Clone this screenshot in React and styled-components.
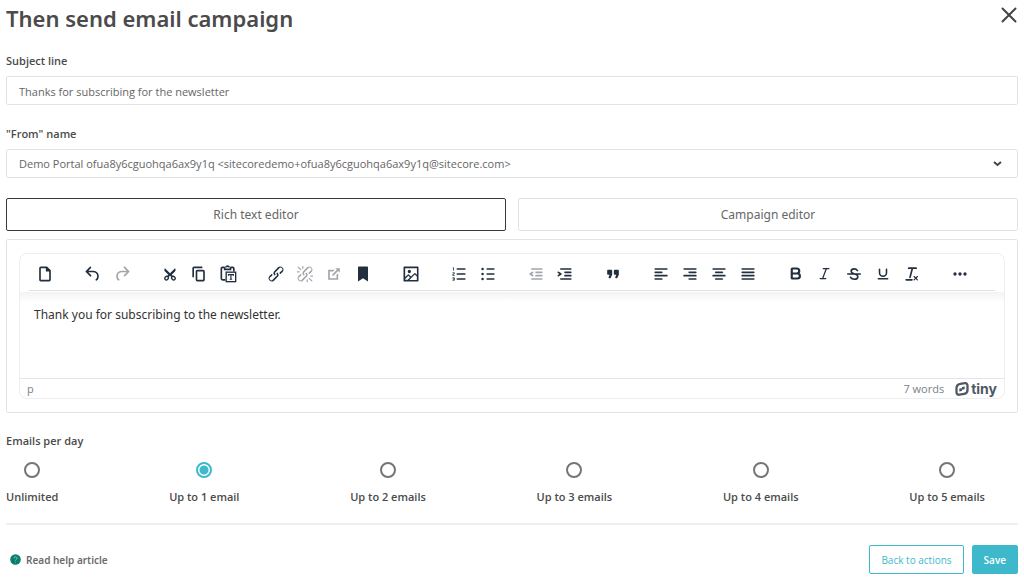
import React, { useState } from "react";
import styled, { createGlobalStyle } from "styled-components";
import { Bold, Italic, Underline } from "lucide-react";

const colors = {
  text: "#4b4b4b",
  soft: "#666666",
  border: "#e3e3e3",
  ink: "#222f3e",
  teal: "#3db9cb",
};

const GlobalStyle = createGlobalStyle`
  *, *::before, *::after { box-sizing: border-box; }
  body {
    margin: 0;
    background: #fff;
    color: ${colors.text};
    font-family: "Open Sans", "Noto Sans", sans-serif;
    font-size: 11px;
    line-height: 16px;
  }
  button, input, select, textarea { font: inherit; color: inherit; margin: 0; }
`;

const Page = styled.main`
  padding: 4px 6px 8px;
`;

const Header = styled.header`
  display: flex;
  justify-content: space-between;
  align-items: flex-start;
  margin-bottom: 21px;
`;

const Title = styled.h1`
  margin: 0;
  font-family: "Noto Sans", sans-serif;
  font-size: 22px;
  line-height: 28px;
  font-weight: 600;
`;

const CloseButton = styled.button`
  display: flex;
  padding: 3px 1px;
  border: 0;
  background: none;
  cursor: pointer;
`;

const Field = styled.div`
  display: flex;
  flex-direction: column;
  gap: 7px;
  margin-bottom: 21px;
`;

const Label = styled.label`
  font-weight: 600;
  line-height: 16px;
`;

const controlBox = `
  width: 100%;
  height: 29px;
  padding: 1px 12px 0;
  border: 1px solid ${colors.border};
  border-radius: 2px;
  background: #fff;
  outline: 0;
`;

const TextInput = styled.input`
  ${controlBox}
  && { color: ${colors.soft}; }
`;

const SelectWrap = styled.div`
  position: relative;
  display: flex;
`;

const Select = styled.select`
  ${controlBox}
  appearance: none;
  && { color: ${colors.soft}; }
`;

const Chevron = styled.svg`
  position: absolute;
  right: 16px;
  top: 10px;
  pointer-events: none;
`;

const Tabs = styled.div`
  display: grid;
  grid-template-columns: 1fr 1fr;
  gap: 12px;
  margin-top: -1px;
  margin-bottom: 8px;
`;

const Tab = styled.button`
  height: 33px;
  padding-top: 2px;
  border: 1px solid ${(p) => (p.$active ? "#3b3b3b" : colors.border)};
  border-radius: 2px;
  background: #fff;
  cursor: pointer;
  && {
    font-family: "Noto Sans", sans-serif;
    font-size: 12px;
    color: ${colors.soft};
  }
`;

const EditorCard = styled.section`
  padding: 13px 12px;
  border: 1px solid ${colors.border};
  border-radius: 2px;
  margin-bottom: 20px;
`;

const Editor = styled.div`
  border: 1px solid #eeeeee;
  border-radius: 8px;
  overflow: hidden;
`;

const Toolbar = styled.div`
  display: flex;
  gap: 19px;
  height: 37px;
  margin: 0 9px;
  align-items: center;
  border-bottom: 1px solid #dfe1e3;
  padding: 3px 0 0 1px;
`;

const ToolGroup = styled.div`
  display: flex;
`;

const ToolButton = styled.button`
  display: flex;
  align-items: center;
  justify-content: center;
  width: 29px;
  height: 29px;
  padding: 0;
  border: 0;
  background: none;
  cursor: pointer;
  && { color: ${colors.ink}; }
  &&:disabled { color: #a1a6ad; }
`;

const TextArea = styled.textarea`
  display: block;
  width: 100%;
  height: 86px;
  padding: 15px 14px;
  margin-top: 1px;
  border: 0;
  outline: 0;
  resize: none;
  background: linear-gradient(#f3f3f3, #fff 10px);
  && {
    font-family: "Noto Sans", sans-serif;
    font-size: 12px;
    color: #333;
  }
`;

const StatusBar = styled.div`
  display: flex;
  align-items: center;
  height: 20px;
  padding: 1px 7px 0;
  border-top: 1px solid #e3e5e7;
  color: #7a828b;
`;

const WordCount = styled.span`
  margin-left: auto;
  margin-right: 11px;
`;

const Brand = styled.a`
  display: flex;
  align-items: center;
  gap: 2px;
  color: #4e5965;
  font-family: Inter, sans-serif;
  font-size: 14px;
  font-weight: 700;
  text-decoration: none;
`;

const Frequency = styled.fieldset`
  margin: 0 0 18px;
  padding: 0;
  border: 0;
  min-width: 0;
`;

const Legend = styled.legend`
  padding: 0;
  font-weight: 600;
  margin-bottom: 13px;
`;

const Options = styled.div`
  display: flex;
  justify-content: space-between;
  padding-right: 33px;
`;

const Option = styled.label`
  display: flex;
  flex-direction: column;
  align-items: center;
  gap: 11px;
  font-weight: 600;
`;

const Radio = styled.input`
  appearance: none;
  width: 16px;
  height: 16px;
  border: 2px solid #757575;
  border-radius: 50%;
  background: #fff;
  &:checked {
    border-color: ${colors.teal};
    background: radial-gradient(circle, ${colors.teal} 4px, #fff 5px);
  }
`;

const Footer = styled.footer`
  display: flex;
  align-items: center;
  gap: 8px;
  padding-top: 20px;
  border-top: 2px solid #eeeeee;
`;

const HelpLink = styled.a`
  display: flex;
  align-items: center;
  gap: 5px;
  margin-right: auto;
  padding-left: 4px;
  color: #6b6b6b;
  font-family: "Noto Sans", sans-serif;
  font-size: 10px;
  font-weight: 600;
  text-decoration: none;
`;

const ActionButton = styled.button`
  height: 29px;
  padding: 0 11px;
  border: 1px solid ${colors.teal};
  border-radius: 2px;
  background: ${(p) => (p.$primary ? colors.teal : "#fff")};
  cursor: pointer;
  && {
    color: ${(p) => (p.$primary ? "#fff" : colors.teal)};
    font-size: 10px;
    font-weight: ${(p) => (p.$primary ? 600 : 500)};
  }
`;

const Glyph = ({ children }) => (
  <svg width="20" height="20" viewBox="0 0 24 24" fill="currentColor" aria-hidden="true">
    {children}
  </svg>
);

const Bars = ({ rows }) => (
  <Glyph>
    {rows.map(([x, w], i) => (
      <rect key={i} x={x} y={5 + i * 4} width={w} height="2" rx="1" />
    ))}
  </Glyph>
);

const chain =
  "M6.2 12.3a1 1 0 0 1 1.4 1.4l-2 2a2 2 0 1 0 2.6 2.8l4.8-4.8a1 1 0 0 0 0-1.4 1 1 0 1 1 1.4-1.3 2.9 2.9 0 0 1 0 4L9.6 20a3.9 3.9 0 0 1-5.5-5.5l2-2Zm11.6-.6a1 1 0 0 1-1.4-1.4l2-2a2 2 0 1 0-2.6-2.8L11 10.3a1 1 0 0 0 0 1.4A1 1 0 1 1 9.6 13a2.9 2.9 0 0 1 0-4L14.4 4a3.9 3.9 0 0 1 5.5 5.5l-2 2Z";

const indentRows = (
  <>
    <rect x="6" y="5" width="14" height="2" rx="1" />
    <rect x="11" y="9" width="9" height="2" rx="1" />
    <rect x="11" y="13" width="9" height="2" rx="1" />
    <rect x="6" y="17" width="14" height="2" rx="1" />
  </>
);

const icons = {
  newDocument: (
    <Glyph>
      <path d="M14.4 3H7a2 2 0 0 0-2 2v14c0 1.1.9 2 2 2h10a2 2 0 0 0 2-2V7.6L14.4 3ZM17 19H7V5h6v4h4v10Z" />
    </Glyph>
  ),
  undo: (
    <Glyph>
      <path d="M6.4 8H12c3.7 0 6.2 2 6.8 5.1.6 2.7-.4 5.6-2.3 6.8a1 1 0 0 1-1-1.8c1.1-.6 1.8-2.7 1.4-4.6-.5-2.1-2.1-3.5-4.9-3.5H6.4l3.3 3.3a1 1 0 1 1-1.4 1.4l-5-5a1 1 0 0 1 0-1.4l5-5a1 1 0 0 1 1.4 1.4L6.4 8Z" />
    </Glyph>
  ),
  redo: (
    <Glyph>
      <path d="M17.6 10H12c-2.8 0-4.4 1.4-4.9 3.5-.4 2 .3 4 1.4 4.6a1 1 0 1 1-1 1.8c-2-1.2-2.9-4.1-2.3-6.8.6-3 3-5.1 6.8-5.1h5.6l-3.3-3.3a1 1 0 1 1 1.4-1.4l5 5a1 1 0 0 1 0 1.4l-5 5a1 1 0 0 1-1.4-1.4l3.3-3.3Z" />
    </Glyph>
  ),
  cut: (
    <Glyph>
      <path d="M6 5l6 6 6-6c1 1.3 1 2.8 0 4l-4 4 1.5 1.5-1.5 1.500-2-2-2 2-1.500-1.500L10 13 6 9c-1-1.200-1-2.700 0-4Z" />
      <g fill="none" stroke="currentColor" strokeWidth="1.7">
        <ellipse cx="7.9" cy="17" rx="2.4" ry="2" transform="rotate(-45 7.9 17)" />
        <ellipse cx="16.1" cy="17" rx="2.4" ry="2" transform="rotate(45 16.1 17)" />
      </g>
    </Glyph>
  ),
  copy: (
    <Glyph>
      <path d="M16 3H6a2 2 0 0 0-2 2v11h2V5h10V3Zm1 4a2 2 0 0 1 2 2v10a2 2 0 0 1-2 2h-7a2 2 0 0 1-2-2V9c0-1.1.9-2 2-2h7Zm0 12V9h-7v10h7Z" />
    </Glyph>
  ),
  pasteText: (
    <Glyph>
      <g fill="none" stroke="currentColor" strokeWidth="2">
        <path d="M9 19H5.500A1.500 1.500 0 0 1 4 17.500v-12A1.500 1.500 0 0 1 5.500 4H8M15 4h2.500A1.500 1.500 0 0 1 19 5.500V9" />
        <path d="M8 3.500v3h7v-3" />
        <path d="M9.500 4a2.100 2.100 0 0 1 4 0" />
        <rect x="9.8" y="9.8" width="11.4" height="11.4" strokeWidth="1.6" />
        <path d="M12.500 14v-1.200h6V14M15.500 13v5.500M14 18.300h3" strokeWidth="1.4" />
      </g>
    </Glyph>
  ),
  link: (
    <Glyph>
      <path d={chain} />
    </Glyph>
  ),
  unlink: (
    <Glyph>
      <path d={chain} />
      <path
        d="M3.800 3.700 7 6.800M3 9.400h2M9.400 3v2M20.200 20.300 17 17.200M21 14.600h-2M14.600 21v-2"
        fill="none"
        stroke="currentColor"
        strokeWidth="1.5"
        strokeLinecap="round"
      />
    </Glyph>
  ),
  openLink: (
    <Glyph>
      <path d="m15 13 2-2v8H5V7h8l-2 2H7v8h8v-4Zm4-8v5.500l-2-2-5.600 5.500H10v-1.400L15.500 7l-2-2H19Z" />
    </Glyph>
  ),
  bookmark: (
    <Glyph>
      <path d="M6 4v17l6-4 6 4V4c0-.6-.4-1-1-1H7a1 1 0 0 0-1 1Z" />
    </Glyph>
  ),
  image: (
    <Glyph>
      <path d="m5 15.700 3.300-3.200c.3-.3.7-.3 1 0L12 15l4.100-4c.3-.4.8-.4 1 0l2 1.900V5H5v10.700ZM5 18V19h3l2.800-2.900-2-2L5 17.900Zm14-3-2.500-2.400-6.400 6.500H19v-4ZM4 3h16c.6 0 1 .4 1 1v16c0 .6-.4 1-1 1H4a1 1 0 0 1-1-1V4c0-.6.4-1 1-1Zm6 8a2 2 0 1 0 0-4 2 2 0 0 0 0 4Z" />
    </Glyph>
  ),
  orderedList: (
    <Glyph>
      <rect x="9" y="5" width="11" height="2" rx="1" />
      <rect x="9" y="11" width="11" height="2" rx="1" />
      <rect x="9" y="17" width="11" height="2" rx="1" />
      <path
        d="M4.500 4.500h1V8M4.200 10.500h2.200v1.200l-1.900.8v1.200h2.200M4.200 16.500h2.200v3H4.200M4.500 18h1.900"
        fill="none"
        stroke="currentColor"
        strokeLinejoin="round"
      />
    </Glyph>
  ),
  bulletList: (
    <Glyph>
      {[6, 12, 18].map((y) => (
        <g key={y}>
          <circle cx="5.5" cy={y} r="1.5" />
          <rect x="10" y={y - 1} width="10" height="2" rx="1" />
        </g>
      ))}
    </Glyph>
  ),
  outdent: (
    <Glyph>
      {indentRows}
      <path d="M8.600 13.200a1 1 0 0 1-1.200 1.600l-3-2a1 1 0 0 1 0-1.600l3-2a1 1 0 0 1 1.200 1.600L6.800 12l1.800 1.200Z" />
    </Glyph>
  ),
  indent: (
    <Glyph>
      {indentRows}
      <path d="M3.400 14.800a1 1 0 0 1-.2-1.400L5.200 12l-1.800-1.200a1 1 0 0 1 1.200-1.600l3 2a1 1 0 0 1 0 1.600l-3 2a1 1 0 0 1-1.200 0Z" />
    </Glyph>
  ),
  quote: (
    <Glyph>
      <path d="M7.500 17h.9c.4 0 .7-.2.9-.6L11 13V8c0-.6-.4-1-1-1H6a1 1 0 0 0-1 1v4c0 .6.4 1 1 1h2l-1.300 2.700a1 1 0 0 0 .8 1.300Zm8 0h.9c.4 0 .7-.2.9-.6L19 13V8c0-.6-.4-1-1-1h-4a1 1 0 0 0-1 1v4c0 .6.4 1 1 1h2l-1.300 2.700a1 1 0 0 0 .8 1.300Z" />
    </Glyph>
  ),
  alignLeft: <Bars rows={[[4, 16], [4, 10], [4, 16], [4, 10]]} />,
  alignRight: <Bars rows={[[4, 16], [10, 10], [4, 16], [10, 10]]} />,
  alignCenter: <Bars rows={[[4, 16], [7, 10], [4, 16], [7, 10]]} />,
  justify: <Bars rows={[[4, 16], [4, 16], [4, 16], [4, 16]]} />,
  bold: <Bold size={15} strokeWidth={3.5} />,
  italic: <Italic size={15} strokeWidth={2} />,
  strike: (
    <Glyph>
      <g fill="none" stroke="currentColor" strokeWidth="1.9" strokeLinecap="round">
        <path d="M16.200 8C15.200 6.400 14 5.800 12.300 5.800c-2.200 0-3.700 1.200-3.700 3 0 4.200 8 2.200 8 6.400 0 2-1.700 3.100-4.200 3.100-2 0-3.600-.8-4.600-2.400M4.500 12h15" />
      </g>
    </Glyph>
  ),
  underline: <Underline size={14} strokeWidth={2.7} />,
  clear: (
    <Glyph>
      <path d="M13.200 6a1 1 0 0 1 0 .2l-2.600 10a1 1 0 0 1-1 .8h-.2a.8.8 0 0 1-.8-1l2.600-10H8a1 1 0 1 1 0-2h9a1 1 0 0 1 0 2h-3.800ZM5 18h7a1 1 0 0 1 0 2H5a1 1 0 0 1 0-2Zm13 1.500L16.500 18 15 19.500a.7.7 0 0 1-1-1l1.500-1.500-1.500-1.500a.7.7 0 0 1 1-1l1.500 1.500 1.500-1.500a.7.7 0 0 1 1 1L17.500 17l1.500 1.500a.7.7 0 0 1-1 1Z" />
    </Glyph>
  ),
  more: (
    <Glyph>
      <circle cx="6" cy="12" r="2" />
      <circle cx="12" cy="12" r="2" />
      <circle cx="18" cy="12" r="2" />
    </Glyph>
  ),
};

const toolGroups = [
  [["newDocument", "New document"]],
  [["undo", "Undo"], ["redo", "Redo", true]],
  [["cut", "Cut"], ["copy", "Copy"], ["pasteText", "Paste as text"]],
  [["link", "Insert link"], ["unlink", "Remove link", true], ["openLink", "Open link", true], ["bookmark", "Anchor"]],
  [["image", "Insert image"]],
  [["orderedList", "Numbered list"], ["bulletList", "Bullet list"]],
  [["outdent", "Decrease indent", true], ["indent", "Increase indent"]],
  [["quote", "Blockquote"]],
  [["alignLeft", "Align left"], ["alignRight", "Align right"], ["alignCenter", "Align center"], ["justify", "Justify"]],
  [["bold", "Bold"], ["italic", "Italic"], ["strike", "Strikethrough"], ["underline", "Underline"], ["clear", "Clear formatting"]],
  [["more", "More"]],
];

const frequencies = ["Unlimited", "Up to 1 email", "Up to 2 emails", "Up to 3 emails", "Up to 4 emails", "Up to 5 emails"];

export default function App() {
  const [tab, setTab] = useState("Rich text editor");
  const [frequency, setFrequency] = useState("Up to 1 email");

  return (
    <>
      <GlobalStyle />
      <Page>
        <Header>
          <Title>Then send email campaign</Title>
          <CloseButton type="button" aria-label="Close">
            <svg width="16" height="16" viewBox="0 0 16 16" fill="none" stroke="#444" strokeWidth="2" strokeLinecap="round">
              <path d="M1.500 1.500l13 13M14.500 1.500l-13 13" />
            </svg>
          </CloseButton>
        </Header>

        <Field>
          <Label htmlFor="subject">Subject line</Label>
          <TextInput id="subject" defaultValue="Thanks for subscribing for the newsletter" />
        </Field>

        <Field>
          <Label htmlFor="from">"From" name</Label>
          <SelectWrap>
            <Select id="from">
              <option>{"Demo Portal ofua8y6cguohqa6ax9y1q <sitecoredemo+ofua8y6cguohqa6ax9y1q@sitecore.com>"}</option>
            </Select>
            <Chevron width="9" height="9" viewBox="0 0 9 9" fill="none" stroke="#444" strokeWidth="2" aria-hidden="true">
              <path d="M1 3l3.500 3L8 3" />
            </Chevron>
          </SelectWrap>
        </Field>

        <Tabs>
          {["Rich text editor", "Campaign editor"].map((name) => (
            <Tab key={name} type="button" $active={tab === name} aria-pressed={tab === name} onClick={() => setTab(name)}>
              {name}
            </Tab>
          ))}
        </Tabs>

        <EditorCard>
          <Editor>
            <Toolbar role="toolbar" aria-label="Formatting">
              {toolGroups.map((group, i) => (
                <ToolGroup key={i}>
                  {group.map(([id, label, disabled]) => (
                    <ToolButton key={id} type="button" aria-label={label} disabled={disabled}>
                      {icons[id]}
                    </ToolButton>
                  ))}
                </ToolGroup>
              ))}
            </Toolbar>
            <TextArea aria-label="Email body" spellCheck={false} defaultValue="Thank you for subscribing to the newsletter." />
            <StatusBar>
              <span>p</span>
              <WordCount>7 words</WordCount>
              <Brand href="#tiny">
                <svg width="14" height="14" viewBox="0 0 14 14" fill="none" aria-hidden="true">
                  <path
                    d="M5.400 1.900 9.600 1.200A2.300 2.300 0 0 1 12.500 3.500V7.800A4 4 0 0 1 9.200 11.800L4.400 12.700A2.400 2.400 0 0 1 1.500 10.400V6A4 4 0 0 1 5.400 1.900Z"
                    stroke="currentColor"
                    strokeWidth="2.3"
                  />
                  <path d="M4.300 6.600 7 6.200V5l2.700-.5v2.700L7 7.700v1.200l-2.700.5Z" fill="currentColor" />
                </svg>
                tiny
              </Brand>
            </StatusBar>
          </Editor>
        </EditorCard>

        <Frequency>
          <Legend>Emails per day</Legend>
          <Options>
            {frequencies.map((name) => (
              <Option key={name}>
                <Radio type="radio" name="frequency" checked={frequency === name} onChange={() => setFrequency(name)} />
                {name}
              </Option>
            ))}
          </Options>
        </Frequency>

        <Footer>
          <HelpLink href="#help">
            <svg width="11" height="11" viewBox="0 0 11 11" aria-hidden="true">
              <circle cx="5.5" cy="5.5" r="5.3" fill="#0b7d6c" />
              <path d="M4 4.300a1.500 1.500 0 1 1 2.200 1.300c-.5.300-.7.500-.7 1M5.500 8v.600" fill="none" stroke="#7fc4ba" />
            </svg>
            Read help article
          </HelpLink>
          <ActionButton type="button">Back to actions</ActionButton>
          <ActionButton type="button" $primary>Save</ActionButton>
        </Footer>
      </Page>
    </>
  );
}
